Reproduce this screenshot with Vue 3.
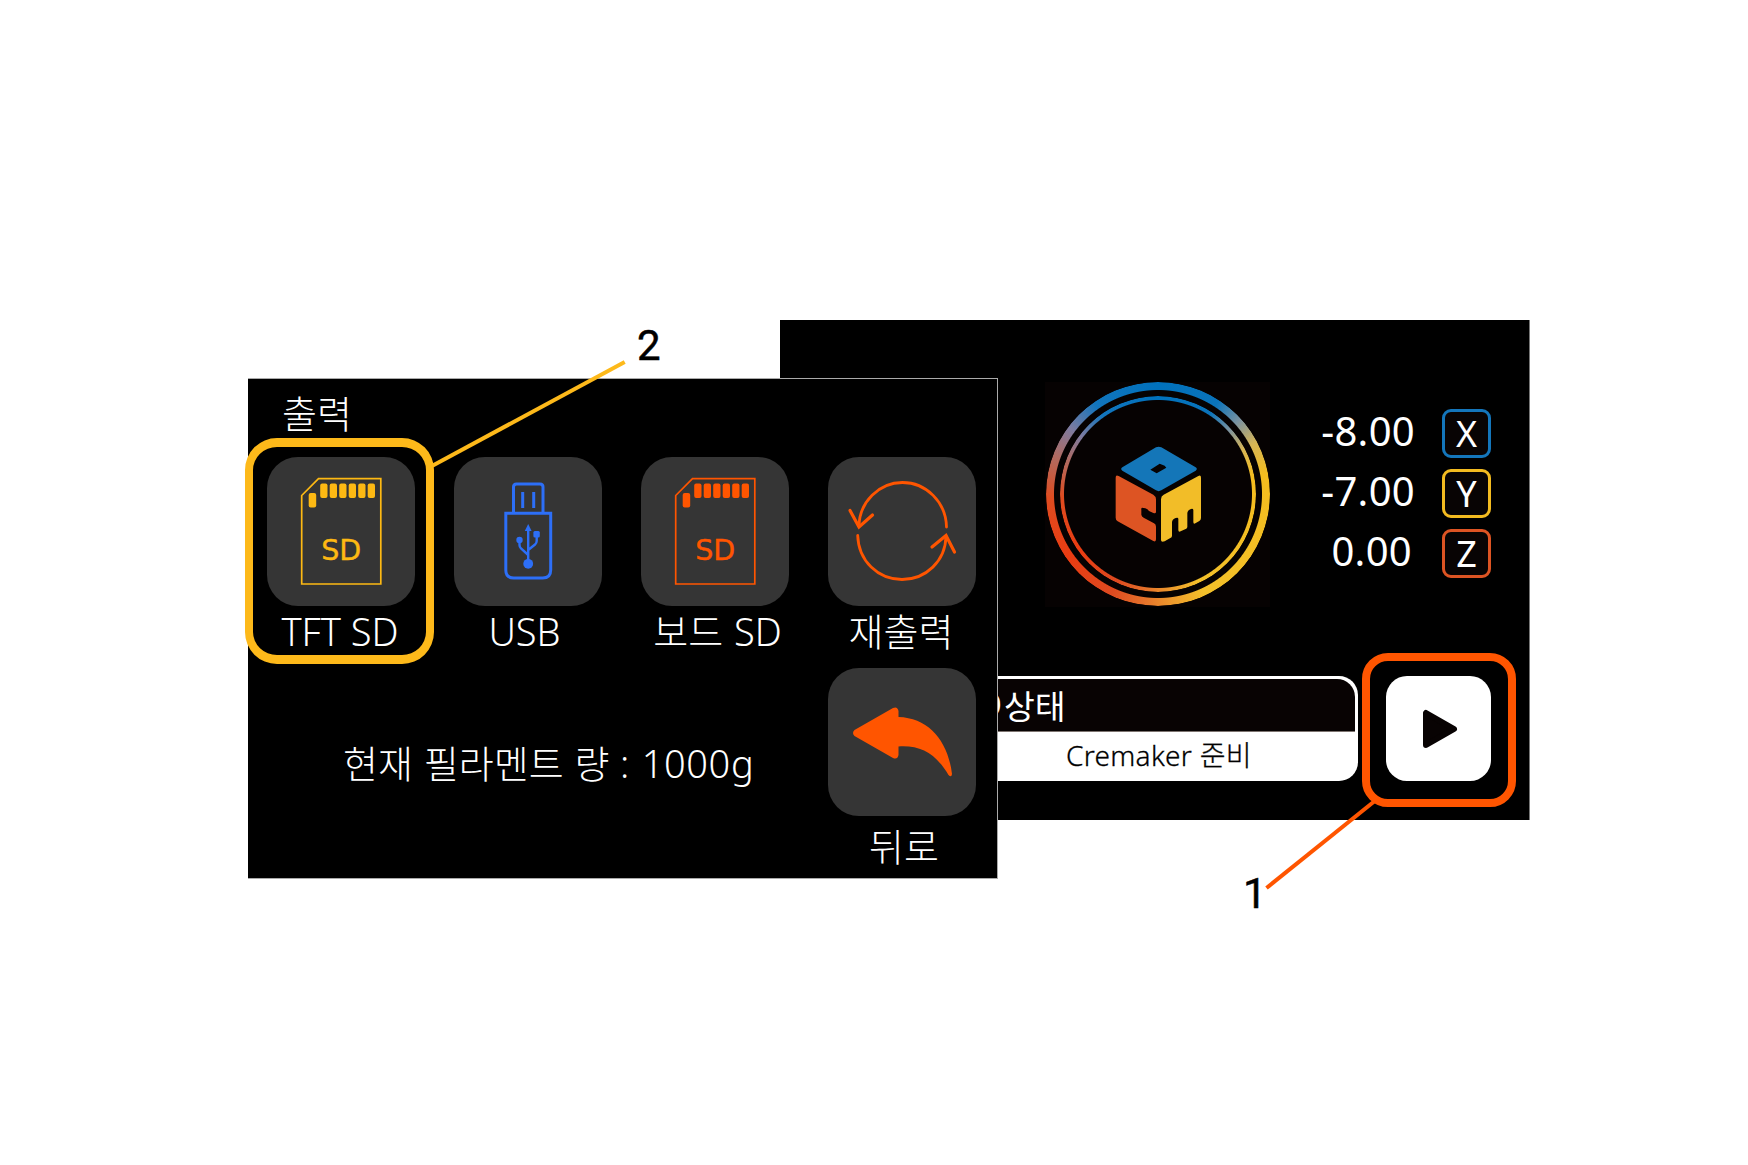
<script setup>
const pins = [0, 1, 2, 3, 4, 5]
const tiles = [
  { icon: 'sd', name: 'tft', color: '#fdb913', label: 'TFT SD' },
  { icon: 'usb', name: 'usb', color: '#2d6ff7', label: 'USB' },
  { icon: 'sd', name: 'board', color: '#ff5500', label: '보드 SD' },
  { icon: 'loop', name: 'reprint', color: '#ff5500', label: '재출력' },
]
const axes = [
  { value: '-8.00', name: 'X', color: '#1476bb' },
  { value: '-7.00', name: 'Y', color: '#f3bb20' },
  { value: '0.00', name: 'Z', color: '#dd5423' },
]
</script>

<template>
  <main class="stage">
    <section class="panel home">
      <div class="top">
        <div class="logo">
          <div class="ring outer"></div>
          <div class="ring inner"></div>
          <svg class="cube" viewBox="0 0 360 390">
            <path fill="#1476b8" fill-rule="evenodd" d="M168 52Q176 48 184 52L287 112Q294 117 287 122L184 181Q176 186 168 181L67 122Q60 117 67 112ZM151 119L170 130L199 113L194 107L179 101Z" />
            <path fill="#dd5423" d="M47 143Q47 133 56 138L160 194Q168 199 168 208V245Q168 252 160 249L147 243Q143 237 136 235L126 233Q123 234 124 240V254Q125 260 131 263L162 280Q168 283 168 290V328Q168 337 160 333L53 274Q47 270 47 263Z" />
            <path fill="#f2bd28" d="M183 208Q183 198 191 194L295 138Q303 134 303 143V264Q303 270 298 273L286 280Q280 283 280 276V240Q279 235 273 237Q262 241 262 250V291Q262 295 257 297L242 304Q235 307 235 300V267Q235 261 227 264Q216 268 216 277V317Q216 322 211 324L194 334Q183 338 183 330Z" />
          </svg>
        </div>
        <ul class="axes">
          <li v-for="a in axes" :key="a.name">
            <span class="value" :class="'v' + a.name">{{ a.value }}</span>
            <span class="axis" :style="{ borderColor: a.color }">{{ a.name }}</span>
          </li>
        </ul>
      </div>
      <div class="bottom">
        <div class="status">
          <div class="status-title"><span class="lcd">LCD</span><span>상태</span></div>
          <div class="status-body">Cremaker 준비</div>
        </div>
        <button class="play">
          <svg viewBox="0 0 36 40"><path d="M4 4V36L32 20Z" fill="#080303" stroke="#080303" stroke-width="6" stroke-linejoin="round" /></svg>
        </button>
      </div>
    </section>

    <section class="panel print">
      <h1>출력</h1>
      <div class="tiles">
        <div v-for="t in tiles" :key="t.name" class="item">
          <div class="tile">
            <svg v-if="t.icon === 'sd'" class="icon" viewBox="0 0 148 148" fill="none" :stroke="t.color">
              <path d="M34.7 38.5L51.5 21.7H113.8V127H34.7Z" stroke-width="1.7" />
              <g :fill="t.color" stroke="none">
                <rect x="41.7" y="36" width="7.5" height="14.5" rx="2" />
                <rect v-for="p in pins" :key="p" :x="53.2 + p * 9.5" y="26.6" width="7.3" height="14.5" rx="2" />
              </g>
              <text x="74.3" y="102.500" text-anchor="middle" class="card-text" :fill="t.color" stroke-width="0.4">SD</text>
            </svg>
            <svg v-else-if="t.icon === 'usb'" class="icon" viewBox="0 0 148 148" fill="none" :stroke="t.color" stroke-width="3">
              <path d="M59.5 55V30Q59.5 27 62.5 27H86Q89 27 89 30V55M68.7 35V51M79.7 35V51" />
              <path d="M51.8 56.3H96.7V113Q96.7 121 88.7 121H59.8Q51.8 121 51.8 113Z" />
              <path d="M74.2 72V105M65.5 83V88Q65.5 90 67 91.5L74.2 98M82.7 78V84Q82.7 86 81 87.5L74.2 93" stroke-width="2.4" />
              <g :fill="t.color" stroke="none">
                <path d="M74.2 67L77.6 74H70.8Z" />
                <circle cx="65.5" cy="83" r="3.2" />
                <rect x="79.4" y="74" width="6.4" height="6.4" rx="1.5" />
                <circle cx="74.2" cy="106.8" r="4.9" />
              </g>
            </svg>
            <svg v-else class="icon" viewBox="0 0 148 148" fill="none" :stroke="t.color" stroke-width="2.8" stroke-linecap="round">
              <path d="M118.5 70C118 45 98 25.5 74.5 25.5C51 25.5 31.5 45 31 69" />
              <path d="M29.7 78.5C30.5 104 50 122.5 74 122.5C98 122.5 117.5 104 118 79" />
              <path d="M22 53.5L31 70L44.5 58M104 90L118 78.5L126.5 95" stroke-width="3.2" />
            </svg>
          </div>
          <div class="label" :class="'label-' + t.name">{{ t.label }}</div>
        </div>
      </div>
      <div class="foot">
        <p class="filament">현재 필라멘트 량 <span class="amount">: 1000g</span></p>
        <div class="item">
          <div class="tile">
            <svg class="icon" viewBox="0 0 148 148" fill="#ff5500">
              <path d="M26.500 62L65 40Q69.500 38 70.500 43V49C101 50 120 73 124 106Q123.500 110 120.500 107C108 86 93 77 70.500 78.500V87Q69.500 92 65 90L26.500 68Q23.500 65 26.500 62Z" />
            </svg>
          </div>
          <div class="label label-back">뒤로</div>
        </div>
      </div>
    </section>

    <svg class="leaders" viewBox="0 0 1748 1165" fill="none" stroke-width="4">
      <path d="M431 466.500L624.700 362" stroke="#fdb91a" />
      <path d="M1376 800L1266.500 888" stroke="#ff5500" />
    </svg>
    <div class="mark yellow"></div>
    <div class="mark orange"></div>
    <span class="num two">2</span>
    <span class="num one">1</span>
  </main>
</template>

<style>
body { margin: 0; background: #fff; }
</style>

<style scoped>
* { box-sizing: border-box; }
.stage {
  position: relative;
  width: 1748px;
  height: 1165px;
  background: #fff;
  overflow: hidden;
  font-family: "Noto Sans", "Noto Sans CJK KR", sans-serif;
}
.panel { position: absolute; background: #000; color: #fff; white-space: nowrap; }

.home { left: 780px; top: 320px; width: 750px; height: 500px; border-right: 1px solid #777; }
.top { display: flex; padding: 62px 0 0 265px; height: 356px; }
.logo { position: relative; width: 225px; height: 225px; background: #060202; }
.ring {
  position: absolute;
  border-radius: 50%;
  background: conic-gradient(#0071bc 0deg, #0a73ba 33deg, #7c93a0 48deg, #d5b557 62deg, #f5bd1e 80deg, #f3c02a 155deg, #ee9b2c 172deg, #e5702a 188deg, #dd4a20 205deg, #ea3c12 235deg, #df4c20 268deg, #b06a60 290deg, #7d7ba0 307deg, #1275bd 325deg, #0071bc 360deg);
}
.outer { left: 1px; top: 0; width: 224px; height: 224px; mask: radial-gradient(circle, transparent 103.500px, #000 104.500px); }
.inner { left: 15px; top: 14px; width: 196px; height: 196px; mask: radial-gradient(circle, transparent 93.500px, #000 94.500px); }
.cube { position: absolute; left: 55px; top: 48px; width: 120px; height: 130px; }
.axes { margin: 27px 0 0 51px; padding: 0; list-style: none; width: 170px; display: flex; flex-direction: column; gap: 11px; }
.axes li { display: flex; height: 49px; align-items: center; justify-content: flex-end; }
.value { font-size: 40px; line-height: 49px; letter-spacing: 0.3px; height: 49px; margin-right: 27px; transform: translateY(-3px); }
.vZ { margin-right: 30px; }
.axis { width: 49px; height: 49px; border: 3px solid; border-radius: 9px; background: #080404; font-size: 36px; line-height: 43px; text-align: center; }
.bottom { display: flex; gap: 28px; height: 105px; }
.status { width: 578px; height: 105px; background: #fff; border-radius: 0 19px 19px 0; padding: 3px 3px 0 0; color: #000; }
.status-title { display: flex; height: 53px; background: #080303; border-bottom: 1px solid #7d7470; border-top-right-radius: 18px; color: #fff; font-family: "Noto Sans CJK KR", sans-serif; font-size: 33.500px; line-height: 52px; }
.lcd { width: 222px; margin-right: 2px; text-align: right; line-height: 48px; }
.status-body { height: 49px; padding-left: 286px; font-size: 28px; line-height: 47px; font-weight: 300; letter-spacing: 0.3px; -webkit-text-stroke: 0.3px #000; }
.play { width: 105px; height: 105px; border: 0; border-radius: 21px; background: #fff; padding: 0; display: flex; align-items: center; justify-content: center; }
.play svg { width: 36px; height: 40px; margin-left: 2px; }

.print { left: 248px; top: 378px; width: 750px; height: 501px; border: solid #aaa; border-width: 1px 1px 1px 0; font-weight: 300; font-size: 38px; }
h1 { margin: 0; height: 78px; padding: 5px 0 0 34px; font-size: 38px; line-height: 58px; font-weight: 300; }
.tiles { display: flex; gap: 39px; padding-left: 19px; }
.item { width: 148px; }
.tile { width: 148px; height: 148.500px; border-radius: 31px; background: #353535; }
.icon { display: block; width: 148px; height: 148px; }
.card-text { font: 400 28.500px "DejaVu Sans", sans-serif; }
.label { height: 62px; display: flex; justify-content: center; line-height: 50px; }
.label-tft { padding-right: 2px; }
.label-usb { padding-right: 7px; }
.label-board { padding-left: 5px; word-spacing: 1px; }
.label-reprint { padding-right: 2px; }
.foot { display: flex; padding-left: 95px; }
.filament { margin: 0; width: 485px; height: 148px; line-height: 191px; word-spacing: 1px; }
.amount { letter-spacing: 0.6px; word-spacing: 1.500px; margin-left: -0.5px; }
.label-back { line-height: 60px; padding-left: 4px; }

.leaders { position: absolute; inset: 0; width: 1748px; height: 1165px; }
.mark { position: absolute; border: 8px solid; }
.yellow { left: 245px; top: 438px; width: 189px; height: 226px; border-color: #fdb91a; border-width: 9px 8px; border-radius: 32px; }
.orange { left: 1362px; top: 653px; width: 154px; height: 154px; border-color: #ff5500; border-width: 8px; border-radius: 26px; }
.num { position: absolute; color: #000; font: 400 42px/42px Roboto, sans-serif; -webkit-text-stroke: 0.5px #000; }
.two { left: 637px; top: 325px; }
.one { left: 1243px; top: 873px; }
</style>
